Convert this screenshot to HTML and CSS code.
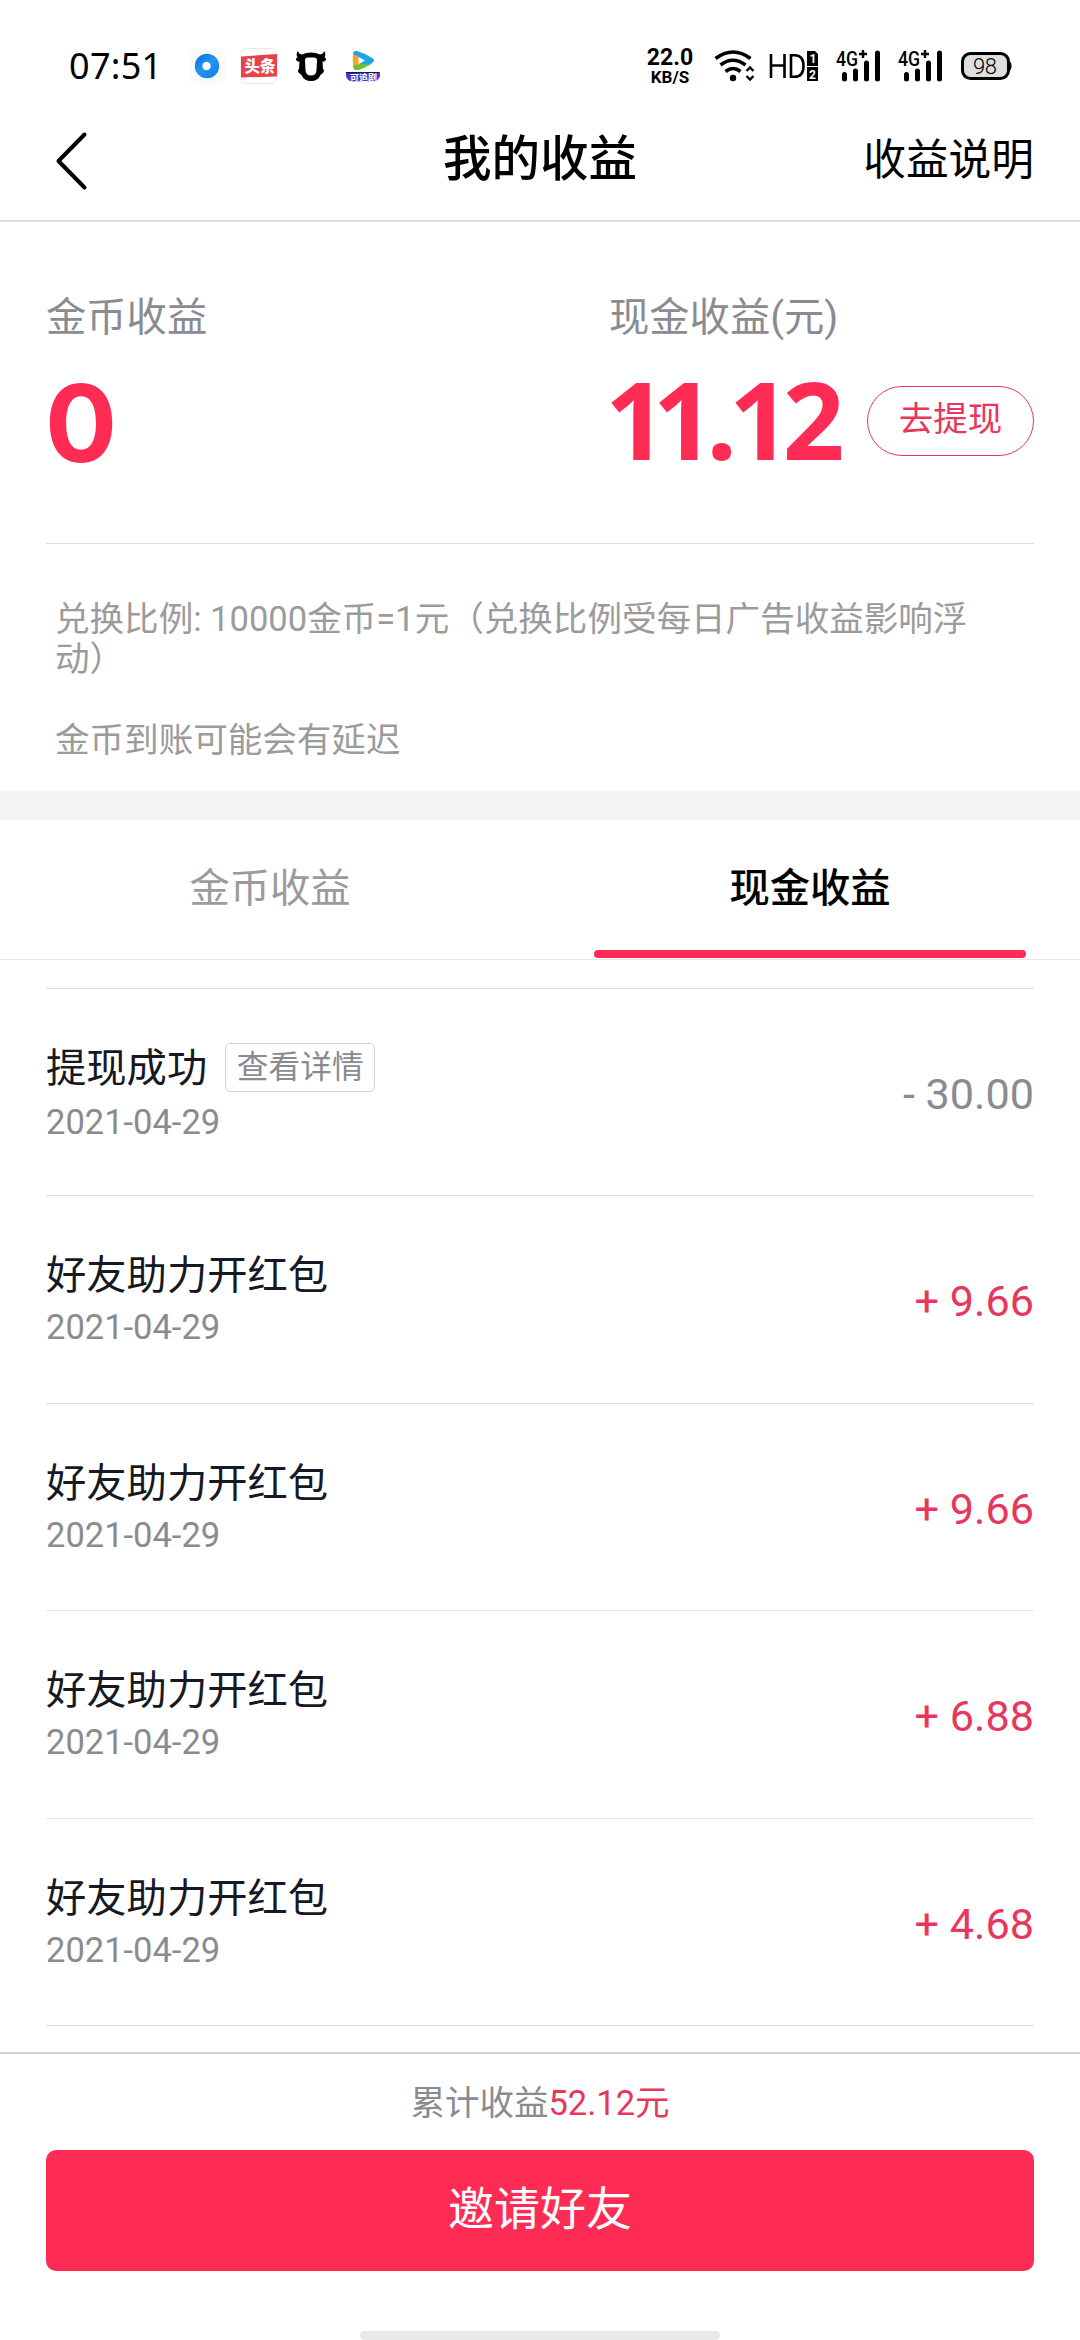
FILE: index.html
```html
<!DOCTYPE html>
<html lang="zh-CN">
<head>
<meta charset="utf-8">
<title>我的收益</title>
<link rel="stylesheet" href="styles.css">
</head>
<body>
<div class="status">
  <span class="clock">07:51</span>
  <svg class="app-browser" width="36" height="36" viewBox="189 48 36 36">
    <defs><linearGradient id="blue" x1="0" y1="0" x2="1" y2="1"><stop offset="0" stop-color="#0a6fdc"/><stop offset=".5" stop-color="#2196f3"/><stop offset="1" stop-color="#1478e0"/></linearGradient></defs>
    <rect x="189" y="48" width="36" height="36" rx="7" fill="#fafafa"/>
    <circle cx="207" cy="66" r="12.2" fill="url(#blue)"/><circle cx="206.500" cy="66" r="4.200" fill="#fff"/>
  </svg>
  <svg class="app-news" width="38" height="36" viewBox="240 48 38 36">
    <rect x="241" y="48.500" width="36" height="35" rx="6" fill="#fff" stroke="#e2e2e2" stroke-width=".8"/>
    <path d="M241 56.500L277 54v22.500L241 77.500z" fill="#e8434b"/>
    <text x="244.500" y="71.500" class="news-text">头条</text>
  </svg>
  <svg class="app-cow" width="32" height="32" viewBox="295 50 32 32">
    <path d="M298 51Q298.500 54 302 54.500Q306 52.500 311 52.500T320 54.500Q323.500 54 324 51Q326.500 54 324.500 57.500Q327 58.500 325.500 60.500Q324.500 62 322.500 61.500L323 69Q325 70.500 323 73Q321.500 74 320.500 75Q318 81 311 81T301.500 75Q300.500 74 299 73Q297 70.500 299 69L299.500 61.500Q297.500 62 296.500 60.500Q295 58.500 297.500 57.500Q295.500 54 298 51z" fill="#000"/>
    <path d="M308 57.500h6q3 0 3 3l-.5 10q-.5 5-5.500 5t-5.500-5l-.5-10q0-3 3-3z" fill="#fff"/>
  </svg>
  <svg class="app-video" width="36" height="34" viewBox="346 51 36 34">
    <path d="M353 55.500q0-3 4-2.500 9 2.500 16 7.500 2 2 0 4-7 5-15 7.500-4 .5-4.500-2.500-1-7-.5-14z" fill="#1ba6e5"/>
    <path d="M353 55.500q4 2.500 9 5.500l-3 10.500q-5 1.500-5.500-2-1-7-.5-14z" fill="#fca51e"/>
    <path d="M355 67q8-.5 17-1.500-6 4-14 6.500-4 .5-4.500-2.500z" fill="#65c52e"/>
    <path d="M358.500 59l6.500 3.500-6.500 3.500z" fill="#fff"/>
    <path d="M346 74h34v4q-1.500 5-7 5.500h-20q-6-.5-7-5.500z" fill="#4b35d1"/><path d="M346 74h33v1.300h-33z" fill="#171247"/>
    <text x="350" y="82.500" class="badge-text">可追剧</text>
  </svg>
  <div class="speed"><span>22.0</span><small>KB/S</small></div>
  <svg class="wifi" width="40" height="32" viewBox="715 50 40 32">
    <g fill="none" stroke="#000" stroke-width="3.600"><path d="M715.500 58.500Q733 45.500 750.500 58.500"/><path d="M720.500 65Q733 55.500 745.500 65"/><path d="M725.500 71.500Q733 65.500 740.500 71.500"/></g>
    <circle cx="733" cy="78" r="3.200"/><path d="M746.500 71l3.500-3.500 3.500 3.500M746.500 76l3.500 3.500 3.500-3.500" fill="none" stroke="#000" stroke-width="2.400"/>
  </svg>
  <svg class="hd" width="50" height="32" viewBox="769 50 50 32">
    <path d="M771 54v24M784.500 54v24M771 65.500h13.500M791 55.200v21.600h3.500q9 0 9-10.800t-9-10.800z" fill="none" stroke="#000" stroke-width="2.600"/>
    <path d="M807 51h8l3 3v12h-11zM807 67h11v14h-11z"/>
    <text x="809.500" y="63" class="sim">1</text><text x="809" y="78.500" class="sim">2</text>
  </svg>
  <svg class="signal" width="45" height="32" viewBox="836 50 45 32">
    <text x="836" y="66" class="net" textLength="22" lengthAdjust="spacingAndGlyphs">4G</text>
    <path d="M859 54h8M863 50v8" stroke="#000" stroke-width="2.400"/>
    <path d="M844.500 74.500v4.500M855.500 71v8M866.500 63v16M877.500 53v26" stroke="#000" stroke-width="5" stroke-linecap="round"/>
  </svg>
  <svg class="signal" width="45" height="32" viewBox="836 50 45 32">
    <text x="836" y="66" class="net" textLength="22" lengthAdjust="spacingAndGlyphs">4G</text>
    <path d="M859 54h8M863 50v8" stroke="#000" stroke-width="2.400"/>
    <path d="M844.500 74.500v4.500M855.500 71v8M866.500 63v16M877.500 53v26" stroke="#000" stroke-width="5" stroke-linecap="round"/>
  </svg>
  <svg class="battery" width="51" height="30" viewBox="961 51 51 30">
    <rect x="962.500" y="53.500" width="46" height="25" rx="8" fill="#dedede" stroke="#000" stroke-width="3"/>
    <path d="M1009 61q2.500 1 2.500 5t-2.500 5z"/>
    <text x="973" y="73.500" class="level" textLength="24">98</text>
  </svg>
</div>

<header class="nav">
  <svg class="back" width="34" height="60" viewBox="0 0 34 60"><path d="M30.500 4.500L4.500 31 30.500 57.500" fill="none" stroke="#000" stroke-width="4" stroke-linecap="round" stroke-linejoin="round"/></svg>
  <h1>我的收益</h1>
  <a class="explain">收益说明</a>
</header>

<section class="summary">
  <div class="balances">
    <div class="balance"><div class="label">金币收益</div><div class="value coins">0</div></div>
    <div class="balance"><div class="label">现金收益(元)</div>
      <div class="cash"><div class="value"><span class="lead">1</span>1.12</div><a class="withdraw">去提现</a></div>
    </div>
  </div>
  <div class="notes"><p>兑换比例: 10000金币=1元（兑换比例受每日广告收益影响浮动）</p><p>金币到账可能会有延迟</p></div>
</section>

<nav class="tabs"><div class="tab">金币收益</div><div class="tab active">现金收益</div></nav>

<main class="list">
  <div class="row"><div><div class="title">提现成功<span class="detail">查看详情</span></div><div class="date lower">2021-04-29</div></div><div class="amount out">- 30.00</div></div>
  <div class="row"><div><div class="title">好友助力开红包</div><div class="date">2021-04-29</div></div><div class="amount">+ 9.66</div></div>
  <div class="row"><div><div class="title">好友助力开红包</div><div class="date">2021-04-29</div></div><div class="amount">+ 9.66</div></div>
  <div class="row"><div><div class="title">好友助力开红包</div><div class="date">2021-04-29</div></div><div class="amount">+ 6.88</div></div>
  <div class="row"><div><div class="title">好友助力开红包</div><div class="date">2021-04-29</div></div><div class="amount">+ 4.68</div></div>
</main>

<footer class="footer">
  <div class="total">累计收益<span>52.12元</span></div>
  <a class="invite">邀请好友</a>
  <div class="home"></div>
</footer>
</body>
</html>
```

FILE: styles.css
```css
* { box-sizing: border-box; }
body {
  margin: 0; width: 1080px; height: 2340px; overflow: hidden; background: #fff;
  display: flex; flex-direction: column;
  font-family: Roboto, "Noto Sans CJK SC", sans-serif; color: #161823;
}
svg { display: block; flex: none; overflow: visible; }

/* status bar */
.status { height: 110px; padding: 22px 0 0 69px; display: flex; align-items: center; flex: none; color: #000; }
.clock { width: 120px; font: 36px/40px "Noto Sans", sans-serif; letter-spacing: 0.3px; }
.app-news { margin-left: 15px; }
.app-cow { margin-left: 17px; }
.app-video { margin-left: 19px; }
.news-text { font: 900 15.500px "Noto Sans CJK SC", sans-serif; fill: #fff; }
.badge-text { font: 700 9px "Noto Sans CJK SC", sans-serif; fill: #fff; }
.speed { width: 50px; margin-left: 263px; display: flex; flex-direction: column; align-items: center; font: 700 23px/21px Roboto, sans-serif; }
.speed small { font-size: 17px; line-height: 18px; }
.wifi { margin-left: 20px; }
.hd { margin-left: 14px; }
.sim { font: 700 12px Roboto, sans-serif; fill: #fff; }
.signal { margin-left: 17px; }
.net { font: 500 20px Roboto, sans-serif; }
.battery { margin-left: 18px; }
.level { font: 300 22px Roboto, sans-serif; }

/* title bar */
.nav { flex: none; height: 112px; padding: 5px 46px 15px 54px; display: grid; grid-template-columns: 1fr auto 1fr; align-items: center; border-bottom: 2px solid #dcdcdc; color: #000; }
.nav h1 { margin: 0 0 0 -8px; font-size: 48.500px; line-height: 60px; font-weight: 500; }
.explain { font-size: 42.700px; line-height: 60px; text-align: right; }

/* balances */
.summary { flex: none; height: 598px; padding: 0 46px; border-bottom: 29px solid #f3f4f6; }
.balances { height: 322px; border-bottom: 1.500px solid #dedede; display: grid; grid-template-columns: 563px 1fr; padding-top: 66px; }
.label { font-size: 40.300px; line-height: 60px; color: #8a8b91; }
.value { margin: 26px 0 0 -4px; font: 750 108px/90px "Noto Sans", sans-serif; letter-spacing: -8px; color: #fe2c55; }
.value .lead { letter-spacing: -14px; }
.value.coins { margin: 30px 0 0 -1px; font: 700 107px/90px Inter, sans-serif; letter-spacing: 0; }
.cash { display: flex; justify-content: space-between; }
.withdraw { width: 167px; height: 70px; margin-top: 38px; border: 1px solid #e8375d; border-radius: 35px; font-size: 34.500px; line-height: 65px; text-align: center; color: #e8375d; }
.notes { padding: 56px 55px 0 9px; font-size: 34.560px; line-height: 39.500px; color: #9b9b9b; }
.notes p { margin: 0 0 42px; }

/* tabs */
.tabs { flex: none; height: 140px; border-bottom: 1.500px solid #e6e6e6; display: grid; grid-template-columns: 1fr 1fr; }
.tab { text-align: center; font-size: 40.300px; line-height: 138px; height: 138px; color: #9b9b9b; }
.tab.active { font-weight: 500; color: #000; display: flex; flex-direction: column; align-items: center; }
.tab.active::after { content: ""; flex: none; width: 432px; height: 8px; margin-top: -8px; border-radius: 4px; background: #fe2c55; }

/* records */
.list { flex: none; margin: 28px 46px 0; border-top: 1px solid #dedede; }
.row { height: 207.400px; border-bottom: 1px solid #dedede; display: flex; justify-content: space-between; }
.title { margin-top: 50px; height: 60px; display: flex; align-items: center; font-size: 40.300px; line-height: 60px; }
.detail { margin: -3px 0 0 18px; width: 150px; height: 49px; border: 1.500px solid #d5d5d7; border-radius: 5px; font-size: 31.700px; line-height: 47px; text-align: center; color: #8a8b91; }
.date { margin-top: 1px; font-size: 34.500px; line-height: 40px; color: #8a8b91; }
.lower { margin-top: 3px; }
.amount { margin-top: 76px; font-size: 43.200px; line-height: 60px; color: #e8375d; }
.amount.out { color: #8a8b91; }

/* bottom area */
.footer { margin-top: 26px; flex: 1; border-top: 2px solid #d4d4d4; display: flex; flex-direction: column; align-items: center; }
.total { margin-top: 24px; font-size: 34.500px; line-height: 50px; color: #8a8b91; }
.total span { color: #e8375d; }
.invite { margin-top: 22px; width: 988px; height: 121px; border-radius: 10px; background: #fe2c55; color: #fff; text-align: center; font-size: 46px; line-height: 119px; }
.home { margin-top: 60px; width: 360px; height: 9px; border-radius: 4.500px; background: #e9e9e9; }
```
